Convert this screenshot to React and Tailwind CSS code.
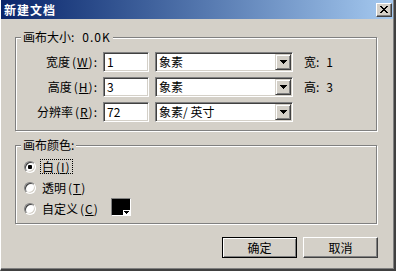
import React from "react";

const FONT = "font-['Noto_Sans_CJK_SC','Noto_Sans',sans-serif]";

function Arrow() {
  return (
    <svg width="7" height="4" viewBox="0 0 7 4" shapeRendering="crispEdges">
      <rect x="0" y="0" width="7" height="1" fill="#000" />
      <rect x="1" y="1" width="5" height="1" fill="#000" />
      <rect x="2" y="2" width="3" height="1" fill="#000" />
      <rect x="3" y="3" width="1" height="1" fill="#000" />
    </svg>
  );
}

function CloseX() {
  const rects = [];
  for (let i = 0; i < 7; i++) {
    rects.push(<rect key={"a" + i} x={i} y={i} width="2" height="1" fill="#000" />);
    rects.push(<rect key={"b" + i} x={6 - i} y={i} width="2" height="1" fill="#000" />);
  }
  return (
    <svg width="8" height="7" viewBox="0 0 8 7" shapeRendering="crispEdges">
      {rects}
    </svg>
  );
}

function Mn({ k, after }) {
  return (
    <span className="ml-[2px] tracking-[1px]">
      (<u>{k}</u>){after}
    </span>
  );
}

function Input({ value }) {
  return (
    <div className="ml-[5px] w-[46px] h-[20px] bg-white border border-t-[#808080] border-l-[#808080] border-b-white border-r-white shadow-[inset_1px_1px_0_#404040,inset_-1px_-1px_0_#d4d0c8] pl-[3px] flex items-center text-[12px] leading-[14px] text-black">
      {value}
    </div>
  );
}

function Select({ value }) {
  return (
    <div className="ml-[6px] w-[138px] h-[20px] bg-white border border-t-[#808080] border-l-[#808080] border-b-white border-r-white shadow-[inset_1px_1px_0_#404040,inset_-1px_-1px_0_#d4d0c8] p-px flex items-stretch">
      <div className="flex-1 pl-[2px] flex items-center text-[12px] leading-[14px] text-black whitespace-pre">{value}</div>
      <div className="w-[16px] bg-[#d4d0c8] border border-t-[#d4d0c8] border-l-[#d4d0c8] border-b-[#404040] border-r-[#404040] shadow-[inset_1px_1px_0_#fff,inset_-1px_-1px_0_#808080] flex items-center justify-center">
        <Arrow />
      </div>
    </div>
  );
}

function Row({ label, mn, value, unit, infoLabel, infoValue }) {
  return (
    <div className="flex items-center h-[20px]">
      <div className="w-[82px] text-right text-[12px] leading-[14px] text-black whitespace-nowrap">
        {label}
        <Mn k={mn} after=":" />
      </div>
      <Input value={value} />
      <Select value={unit} />
      {infoLabel ? (
        <div className="ml-[11px] text-[12px] leading-[14px] text-black whitespace-nowrap">
          {infoLabel}:<span className="ml-[7px]">{infoValue}</span>
        </div>
      ) : null}
    </div>
  );
}

function Radio({ checked }) {
  return (
    <div className="w-[12px] h-[12px] rounded-full bg-white border border-t-[#808080] border-l-[#808080] border-b-white border-r-white shadow-[inset_1px_1px_0_#404040,inset_-1px_-1px_0_#d4d0c8] flex items-center justify-center shrink-0">
      {checked ? <div className="w-[4px] h-[4px] rounded-[1px] bg-black" /> : null}
    </div>
  );
}

export default function App() {
  return (
    <div className={`${FONT} w-[396px] h-[271px] bg-[#d4d0c8] border-l border-l-white border-r-2 border-r-[#404040] border-b-2 border-b-[#404040] flex flex-col`}>
      <div className="flex-1 border-r border-b border-[#808080] flex flex-col">
        {/* title bar */}
        <div className="h-[19px] bg-linear-to-r from-[#0a246a] to-[#a6caf0] flex items-center justify-between pl-[3px] pr-px">
          <span className="text-white font-bold text-[12px] leading-[14px] tracking-[1px]">新建文档</span>
          <div className="w-[16px] h-[14px] bg-[#d4d0c8] border border-t-white border-l-white border-b-[#404040] border-r-[#404040] shadow-[inset_-1px_-1px_0_#808080] flex items-center justify-center">
            <CloseX />
          </div>
        </div>

        <div className="flex flex-col pl-[14px] pt-[11px]">
          <fieldset className="w-[362px] border border-[#808080] shadow-[inset_1px_1px_0_#fff,1px_1px_0_#fff] px-0 pb-[8px]">
            <legend className="ml-[5px] px-[2px] bg-[#d4d0c8] text-[12px] leading-[14px] text-black">
              画布大小:<span className="ml-[8px] tracking-[1px]">0.0K</span>
            </legend>
            <div className="flex flex-col gap-[5px] pt-[8px]">
              <Row label="宽度" mn="W" value="1" unit="象素" infoLabel="宽" infoValue="1" />
              <Row label="高度" mn="H" value="3" unit="象素" infoLabel="高" infoValue="3" />
              <Row label="分辨率" mn="R" value="72" unit="象素/ 英寸" />
            </div>
          </fieldset>

          <fieldset className="mt-[7px] w-[362px] border border-[#808080] shadow-[inset_1px_1px_0_#fff,1px_1px_0_#fff] px-0 pb-[4px]">
            <legend className="ml-[5px] px-[2px] bg-[#d4d0c8] text-[12px] leading-[14px] text-black">画布颜色:</legend>
            <div className="flex flex-col pl-[8px] pt-[4px] text-[12px] leading-[13px] text-black">
              <div className="flex items-center h-[21px]">
                <Radio checked />
                <div className="ml-[4px] border border-dotted border-black px-px">
                  白<Mn k="I" />
                </div>
              </div>
              <div className="flex items-center h-[21px]">
                <Radio />
                <div className="ml-[4px] border border-transparent px-px">
                  透明<Mn k="T" />
                </div>
              </div>
              <div className="flex items-center h-[21px]">
                <Radio />
                <div className="ml-[4px] w-[71px] border border-transparent px-px">
                  自定义<Mn k="C" />
                </div>
                <div className="relative w-[20px] h-[18px] self-start border border-t-[#808080] border-l-[#808080] border-b-white border-r-white bg-black">
                  <div className="absolute right-0 bottom-0 w-[7px] h-[5px] bg-white flex items-end justify-center pb-px">
                    <svg width="5" height="3" viewBox="0 0 5 3" shapeRendering="crispEdges">
                      <rect x="0" y="0" width="5" height="1" fill="#000" />
                      <rect x="1" y="1" width="3" height="1" fill="#000" />
                      <rect x="2" y="2" width="1" height="1" fill="#000" />
                    </svg>
                  </div>
                </div>
              </div>
            </div>
          </fieldset>

          <div className="mt-[13px] w-[363px] flex justify-end gap-[6px]">
            <div className="w-[75px] h-[21px] border border-black shadow-[inset_1px_1px_0_#fff,inset_-1px_-1px_0_#808080] flex items-center justify-center text-[12px] leading-[14px] text-black">
              确定
            </div>
            <div className="w-[75px] h-[21px] border border-t-white border-l-white border-b-[#404040] border-r-[#404040] shadow-[inset_-1px_-1px_0_#808080] flex items-center justify-center text-[12px] leading-[14px] text-black">
              取消
            </div>
          </div>
        </div>
      </div>
    </div>
  );
}
